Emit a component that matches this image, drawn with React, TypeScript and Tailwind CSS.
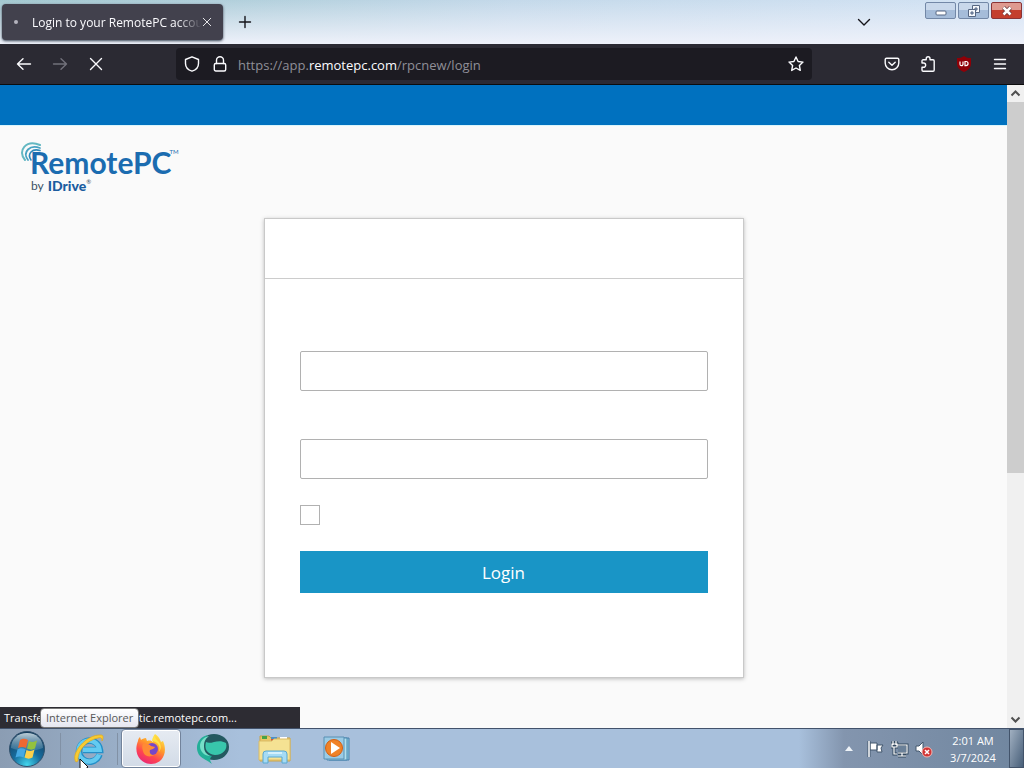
import type { ReactNode } from "react";

const strokeProps = {
  fill: "none",
  stroke: "currentColor",
  strokeWidth: 1.4,
  strokeLinecap: "round" as const,
  strokeLinejoin: "round" as const,
};

function Icon({ children, className = "size-4" }: { children: ReactNode; className?: string }) {
  return (
    <svg viewBox="0 0 16 16" className={className} aria-hidden="true" {...strokeProps}>
      {children}
    </svg>
  );
}

function TitleBar() {
  return (
    <header className="relative flex h-11 items-center bg-linear-to-r from-[#a3c8d0] via-[#c4d9ea] to-[#d3e3f4]">
      <div className="absolute inset-0 bg-linear-to-b from-transparent to-[#eef1fa]" />
      <div className="relative ml-0.5 flex h-9 w-[221px] items-center rounded-sm bg-[#42414d] pr-[11px] pl-3 text-xs text-[#fbfbfe] shadow-sm shadow-gray-600">
        <span className="mr-3.5 size-1 shrink-0 rounded-full bg-[#b4b3bd]" />
        <span className="flex-1 overflow-hidden pt-0.5 whitespace-nowrap mask-r-from-85%">Login to your RemotePC account</span>
        <button aria-label="Close tab" className="shrink-0">
          <Icon className="size-2.5"><path d="M2 2l12 12M14 2L2 14" /></Icon>
        </button>
      </div>
      <button aria-label="New tab" className="relative ml-3.5 text-[#15141a]">
        <Icon>
          <path d="M8 2.500v11M2.500 8h11" />
        </Icon>
      </button>
      <button aria-label="List all tabs" className="relative ml-auto text-[#15141a]">
        <Icon>
          <path d="M2.500 5.500L8 11l5.500-5.500" />
        </Icon>
      </button>
      <div className="relative ml-[53px] flex gap-0.5 self-start pt-0.5 pr-0.5">
        <button aria-label="Minimize" className="flex h-[17px] w-[31px] items-center justify-center rounded-xs border border-[#7388a7] bg-linear-to-b from-[#c9d8eb] from-50% to-[#a5bcd9] to-50%">
          <svg viewBox="0 0 12 6" className="mt-1 h-1.5 w-3"><rect x="1" y="1" width="10" height="4" rx="1" fill="#fff" stroke="#566783" /></svg>
        </button>
        <button aria-label="Restore" className="flex h-[17px] w-[31px] items-center justify-center rounded-xs border border-[#7388a7] bg-linear-to-b from-[#c9d8eb] from-50% to-[#a5bcd9] to-50%">
          <svg viewBox="0 0 12 12" className="size-3" fill="#f5f8fc" stroke="#566783">
            <path d="M4.500.5h7v7h-7z" /><path d="M7 3h2v2H7z" fill="#a9c0de" />
            <path d="M.5 4.500h7v7h-7z" /><path d="M3 7h2v2H3z" fill="#a9c0de" />
          </svg>
        </button>
        <button aria-label="Close" className="flex h-[17px] w-[31px] items-center justify-center rounded-xs border border-[#8b3436] bg-linear-to-b from-[#df9a90] from-45% to-[#c43e2d] to-50%">
          <svg viewBox="0 0 12 10" className="h-2.5 w-3" fill="none"><path d="M2.500 1.500l7 7M9.500 1.500l-7 7" stroke="#69373a" strokeWidth="4" /><path d="M2.500 1.500l7 7M9.500 1.500l-7 7" stroke="#fff" strokeWidth="2.500" /></svg>
        </button>
      </div>
    </header>
  );
}

function NavBar() {
  return (
    <nav className="flex h-[41px] items-center border-b border-[#0c0c0d] bg-[#2b2a33] pl-4 text-[#fbfbfe]">
      <div className="flex w-40 gap-5">
        <button aria-label="Back"><Icon><path d="M14.500 8H1.500M7 2.800L1.500 8 7 13.200" /></Icon></button>
        <button aria-label="Forward" className="text-[#72717b]"><Icon><path d="M1.500 8h13M9 2.800L14.500 8 9 13.200" /></Icon></button>
        <button aria-label="Stop"><Icon><path d="M2.500 2.500l11 11M13.500 2.500l-11 11" /></Icon></button>
      </div>
      <div className="flex h-8 flex-1 items-center rounded-sm bg-[#1c1b22] px-2">
        <Icon className="size-4 shrink-0"><path d="M8 .8l6.500 2.700v4c0 3.500-2.500 6.500-6.500 7.700C4 14 1.500 11 1.500 7.500v-4z" /></Icon>
        <Icon className="ml-3 size-4 shrink-0"><rect x="2.300" y="7.500" width="11.400" height="7.500" rx="1.500" /><path d="M4.500 7.500V4.200a3.500 3.500 0 017 0v3.300" /></Icon>
        <span className="ml-2.5 flex-1 pt-[3px] text-[13px] text-[#8f8f98]">
          https://app.<span className="text-[#fbfbfe]">remotepc.com</span>/rpcnew/login
        </span>
        <button aria-label="Bookmark this page"><Icon><path d="M8 1l2.100 4.500 4.900.6-3.600 3.400.9 4.900L8 12l-4.300 2.400.9-4.900L1 6.100l4.900-.6z" /></Icon></button>
      </div>
      <div className="ml-[72px] flex gap-5 pr-4">
        <button aria-label="Save to Pocket"><Icon><path d="M2.500 2.300h11c.8 0 1.300.5 1.300 1.300V7a6.800 6.800 0 01-13.600 0V3.600c0-.8.5-1.300 1.300-1.300z" /><path d="M4.800 6.200L8 9.300l3.200-3.100" /></Icon></button>
        <button aria-label="Extensions"><Icon><path d="M2 7V5c0-.7.400-1.200 1.200-1.200h3V2.700a1.900 1.900 0 013.800 0v1.100h3c.7 0 1.200.5 1.200 1.200v9c0 .7-.5 1.200-1.200 1.200H3.200c-.7 0-1.200-.5-1.200-1.200v-2.700h1.500a2.100 2.100 0 000-4.300z" /></Icon></button>
        <button aria-label="uBlock Origin">
          <svg viewBox="0 0 16 16" className="size-4">
            <path d="M8 0C6 1.700 3.500 2 1 2v5.500c0 4 2.500 6.500 7 8.500 4.500-2 7-4.500 7-8.500V2C12.500 2 10 1.700 8 0z" fill="#8f0007" />
            <path d="M4 5.500v2.700a1.500 1.500 0 003 0V5.500M9 5.500v4.100h1a2 2 0 000-4.100z" fill="none" stroke="#fff" strokeWidth="1.200" />
          </svg>
        </button>
        <button aria-label="Open menu"><Icon><path d="M2.500 3.500h11M2.500 8h11M2.500 12.500h11" /></Icon></button>
      </div>
    </nav>
  );
}

function Logo() {
  return (
    <a href="#home" aria-label="RemotePC by IDrive" className="ml-5 flex w-40 items-start font-['Lato',sans-serif] text-[#1b6cb0]">
      <svg viewBox="0 0 32 26" className="h-[26px] w-8 shrink-0" fill="none" strokeLinecap="round">
        <path d="M5 18C-3 9 6-3 20 3" stroke="#64b8c2" strokeWidth="2" />
        <path d="M8 18C2 10 10 2 20 6" stroke="#48a3c2" strokeWidth="1.800" />
        <path d="M11 18C7 12 12 6 20 8.500" stroke="#2f8bbb" strokeWidth="1.600" />
      </svg>
      <span className="-ml-[22px] flex flex-col pt-1">
        <span className="text-[30px] leading-8 font-bold">RemotePC</span>
        <span className="flex items-center pl-px text-xs leading-4 text-[#3a5265]">
          by <b className="ml-1 text-sm leading-4 font-black text-[#1b5c9f]">IDrive</b>
          <span className="self-start text-[6px] leading-2">®</span>
        </span>
      </span>
      <span className="-ml-0.5 pt-1.5 text-[6px] leading-2">TM</span>
    </a>
  );
}

function LoginForm() {
  return (
    <form className="mx-auto mt-6 w-[480px] border border-[#c9c9c9] bg-white shadow-[0_1px_4px_rgba(0,0,0,0.25)]">
      <div className="h-[60px] border-b border-[#cccccc]" />
      <div className="flex flex-col px-[35px] pt-[72px] pb-[84px]">
        <input type="email" aria-label="Email address" className="h-10 rounded-xs border border-[#b1b1b1] px-3" />
        <input type="password" aria-label="Password" className="mt-12 h-10 rounded-xs border border-[#b1b1b1] px-3" />
        <input type="checkbox" aria-label="Remember me" className="mt-[26px] size-5 appearance-none border border-[#b1b1b1]" />
        <button type="submit" className="mt-[26px] h-[42px] bg-[#1995c6] pt-0.5 text-[17px] text-white">Login</button>
      </div>
    </form>
  );
}

function Scrollbar() {
  return (
    <div className="flex w-[17px] shrink-0 flex-col bg-[#f0f0f0] text-[#505050]" aria-hidden="true">
      <svg viewBox="0 0 17 17" className="size-[17px]" fill="none" stroke="currentColor" strokeWidth="2"><path d="M4.500 10.500l4-4 4 4" /></svg>
      <div className="flex min-h-0 flex-1 flex-col"><div className="h-[61%] bg-[#cdcdcd]" /></div>
      <svg viewBox="0 0 17 17" className="size-[17px]" fill="none" stroke="currentColor" strokeWidth="2"><path d="M4.500 6.500l4 4 4-4" /></svg>
    </div>
  );
}

function StartOrb() {
  return (
    <svg viewBox="0 0 38 38" className="size-[38px]">
      <defs>
        <radialGradient id="orb" cx=".5" cy=".95" r=".9"><stop offset="0" stopColor="#42d6ed" /><stop offset=".45" stopColor="#176d9e" /><stop offset="1" stopColor="#143c5e" /></radialGradient>
        <linearGradient id="shine" x2="0" y2="1"><stop offset="0" stopColor="#e5f2f7" stopOpacity=".8" /><stop offset="1" stopColor="#8fb8cc" stopOpacity=".2" /></linearGradient>
      </defs>
      <circle cx="19" cy="19" r="17.500" fill="url(#orb)" stroke="#31516c" />
      <path d="M3 18C3 9 10 3 19 3s16 6 16 15c-10 4-22 4-32 0z" fill="url(#shine)" />
      <path d="M12 10c3-2 5.500-1.500 8 0l-2 8c-2.500-1.500-5-1.500-8 0z" fill="#ee6832" />
      <path d="M21 11c3 1.500 5.500 1 8-.5l-2 8c-2.500 1.500-5 1.500-8 0z" fill="#93c13e" />
      <path d="M9.500 19.500c3-2 5.500-1.500 8 0l-2 8c-2.500-1.500-5-1.500-8 0z" fill="#45a9e3" />
      <path d="M18.500 20c3 1.500 5.500 1 8-.5l-2 8c-2.500 1.500-5 1.500-8 0z" fill="#fcd04a" />
    </svg>
  );
}

function IEIcon() {
  return (
    <svg viewBox="0 0 32 32" className="size-8" fill="none">
      <path d="M26.500 21.500A10.500 10.500 0 1127 17H10" stroke="#238fc8" strokeWidth="6.500" />
      <path d="M26 21.500A10.500 10.500 0 1126.500 16.700H10" stroke="#63caf0" strokeWidth="4.500" />
      <path d="M3 29C-3 21 13 1 28 2c2 0 3 2 1 6 0-3-1-4-4-3C14 7 4 18 5 28z" fill="#f8cb32" stroke="#e2a719" strokeWidth=".7" />
    </svg>
  );
}

function FirefoxIcon() {
  return (
    <svg viewBox="0 0 32 32" className="size-8">
      <defs>
        <linearGradient id="fox" x1=".8" y1="0" x2=".25" y2="1"><stop offset="0" stopColor="#ffef4a" /><stop offset=".4" stopColor="#ff9a2a" /><stop offset=".7" stopColor="#ff4650" /><stop offset="1" stopColor="#e72579" /></linearGradient>
      </defs>
      <path d="M20 1c4 3 5 5 6 8l2-1c5 11 0 23-12 23C5 31-2 20 3 8c0-2 1-3 2-4l1 3c1-1 3-2 5-2l1 3c3-1 5 0 6 1 0-3 0-6 2-8z" fill="url(#fox)" />
      <circle cx="17" cy="16" r="6" fill="#7747c8" />
      <path d="M8 11c3-1 6 0 8 2l4 1c-1 2-3 2-5 3-1 3 1 5 4 5-5 3-10 1-11-4-1-3-1-5 0-7z" fill="#ff8a35" />
      <path d="M17 8c6 1 9 5 7 11 3-4 2-8-1-11-2-2-3-3-3-6-2 2-3 4-3 6z" fill="#ffe347" />
    </svg>
  );
}

function TealOrbIcon() {
  return (
    <svg viewBox="0 0 34 34" className="size-[34px]">
      <ellipse cx="18" cy="15" rx="15" ry="13" fill="#235960" />
      <path d="M12 3C1 5-2 17 4 24c3 3 7 4 12 8-3-4-2-6 0-8-6-1-9-4-9-10 0-5 2-8 5-11z" fill="#23af98" />
      <path d="M10 10c5 3 12-4 20 1 2 6-3 12-11 12-8-1-11-6-9-13z" fill="#38c6ac" />
      <path d="M4 14C4 9 8 5 13 4c-4 3-5 6-5 11 0 4 2 7 6 9C9 24 4 20 4 14z" fill="#76dfc8" />
    </svg>
  );
}

function FolderIcon() {
  return (
    <svg viewBox="0 0 34 32" className="h-8 w-[34px]">
      <path d="M2 3h9l2 2h19v23H2z" fill="#e9c667" stroke="#c9a34b" />
      <path d="M4 3h5v3H4z" fill="#45a346" /><path d="M13 4h6v3h-6z" fill="#4d90c7" /><path d="M22 4h7v3h-7z" fill="#fff" /><path d="M13 6h3v2h-3z" fill="#d7523a" />
      <path d="M1 8h13l2-2h16v21H1z" fill="#f5e293" stroke="#dabb67" />
      <path d="M5 30V21q0-3 3-3h18q3 0 3 3v9h-5v-6H10v6z" fill="#a5dbf4" stroke="#58a8d2" />
      <path d="M10 20h14" stroke="#e4f7ff" strokeWidth="1.500" />
    </svg>
  );
}

function MediaIcon() {
  return (
    <svg viewBox="0 0 30 30" className="size-[30px]">
      <path d="M7 4h20v22H7z" fill="#8bcbe0" stroke="#467faa" /><path d="M5 4h20v22H5z" fill="#b2e0ee" stroke="#4b88b0" /><path d="M2 3h20v22H2z" fill="#9acbe5" stroke="#5990b4" />
      <circle cx="12" cy="14" r="8.500" fill="#f08227" stroke="#d35f15" />
      <path d="M9 8l9 6-9 6z" fill="#fff" />
    </svg>
  );
}

function Taskbar() {
  return (
    <footer className="relative flex h-10 shrink-0 items-center border-t border-[#42526b] bg-[#a8c0dc] text-white">
      <div className="absolute inset-y-0 left-0 w-60 bg-linear-to-r from-[#8b9db3] to-transparent" />
      <div className="absolute inset-y-0 right-0 w-[225px] bg-linear-to-r from-transparent via-[#8395ae] via-20% to-[#70869f]" />
      <button aria-label="Start" className="relative ml-2"><StartOrb /></button>
      <button aria-label="Internet Explorer" className="relative ml-3.5 flex h-8 w-[58px] items-center justify-center border-x border-[#8191a5]"><IEIcon /></button>
      <button aria-label="Firefox" className="relative ml-[3px] flex h-[39px] w-[60px] items-center justify-center rounded-sm border border-[#72839b] bg-linear-to-b from-[#e6ebf2] to-[#d2dbe7] shadow-[inset_0_0_0_1px_white]"><FirefoxIcon /></button>
      <button aria-label="Remote viewer" className="relative ml-[15px]"><TealOrbIcon /></button>
      <button aria-label="File Explorer" className="relative ml-7"><FolderIcon /></button>
      <button aria-label="Media Player" className="relative ml-[30px]"><MediaIcon /></button>
      <div className="relative ml-auto flex h-full items-center">
        <button aria-label="Show hidden icons"><svg viewBox="0 0 8 5" className="h-[5px] w-2"><path d="M4 0l4 5H0z" fill="#eef3f8" /></svg></button>
        <svg viewBox="0 0 18 18" className="ml-3.5 size-[18px]" role="img" aria-label="Action Center"><path d="M3 3h7v7H3zM10 5h6l-2 3 1 4h-5z" fill="#fff" stroke="#42566c" /><path d="M2 1v16" stroke="#42566c" strokeWidth="3" /><path d="M2 1v16" stroke="#fff" strokeWidth="1.500" /></svg>
        <svg viewBox="0 0 18 18" className="ml-1.5 size-[18px]" role="img" aria-label="Network" fill="none"><path d="M6 5h10v8H7M11 13v3M7 16h8M2 1v4M5 1v4M1 4h5v3H1zM3 7v7h3" stroke="#33495f" strokeWidth="3" /><path d="M7 6h8v6H7z" fill="#6a8098" /><path d="M6 5h10v8H7M11 13v3M7 16h8M2 1v4M5 1v4M1 4h5v3H1zM3 7v7h3" stroke="#fff" strokeWidth="1.200" /></svg>
        <svg viewBox="0 0 18 18" className="ml-1.5 size-[18px]" role="img" aria-label="Volume muted"><path d="M1 6h3l4-4v13l-4-4H1z" fill="#fff" stroke="#42566c" /><circle cx="12" cy="12" r="5" fill="#d23434" stroke="#f0b8b5" /><path d="M10 10l4 4M14 10l-4 4" stroke="#fff" strokeWidth="1.500" /></svg>
        <time className="ml-3.5 w-[52px] text-center text-[11px] leading-[17px]">2:01 AM<br />3/7/2024</time>
        <button aria-label="Show desktop" className="ml-2.5 h-full w-[15px] border border-[#42536a] bg-linear-to-br from-[#a1b0c1] to-[#485f79]" />
      </div>
      <svg viewBox="0 0 9 9" className="absolute bottom-0 left-[79px] size-[9px]"><path d="M1 0v14L9 8z" fill="#fff" stroke="#111" /></svg>
    </footer>
  );
}

export default function App() {
  return (
    <div className="flex min-h-screen flex-col bg-[#fafafa] font-['Open_Sans','Noto_Sans',sans-serif]">
      <TitleBar />
      <NavBar />
      <div className="relative flex flex-1">
        <main className="min-w-0 flex-1 pb-[50px]">
          <div className="mb-4 h-[41px] border-b border-[#d9f5fc] bg-[#0071bf]" />
          <Logo />
          <LoginForm />
        </main>
        <Scrollbar />
        <div role="status" className="absolute bottom-0 left-0 flex h-[21px] w-[300px] items-center bg-[#2d2c33] px-1 pt-0.5 text-[11px] text-white">
          Transferring data from static.remotepc.com...
        </div>
        <div role="tooltip" className="absolute bottom-0 left-10 rounded-sm border border-[#767676] bg-linear-to-b from-white to-[#e5e6f0] px-[5px] text-[11px] leading-[18px] text-[#575757]">
          Internet Explorer
        </div>
      </div>
      <Taskbar />
    </div>
  );
}
